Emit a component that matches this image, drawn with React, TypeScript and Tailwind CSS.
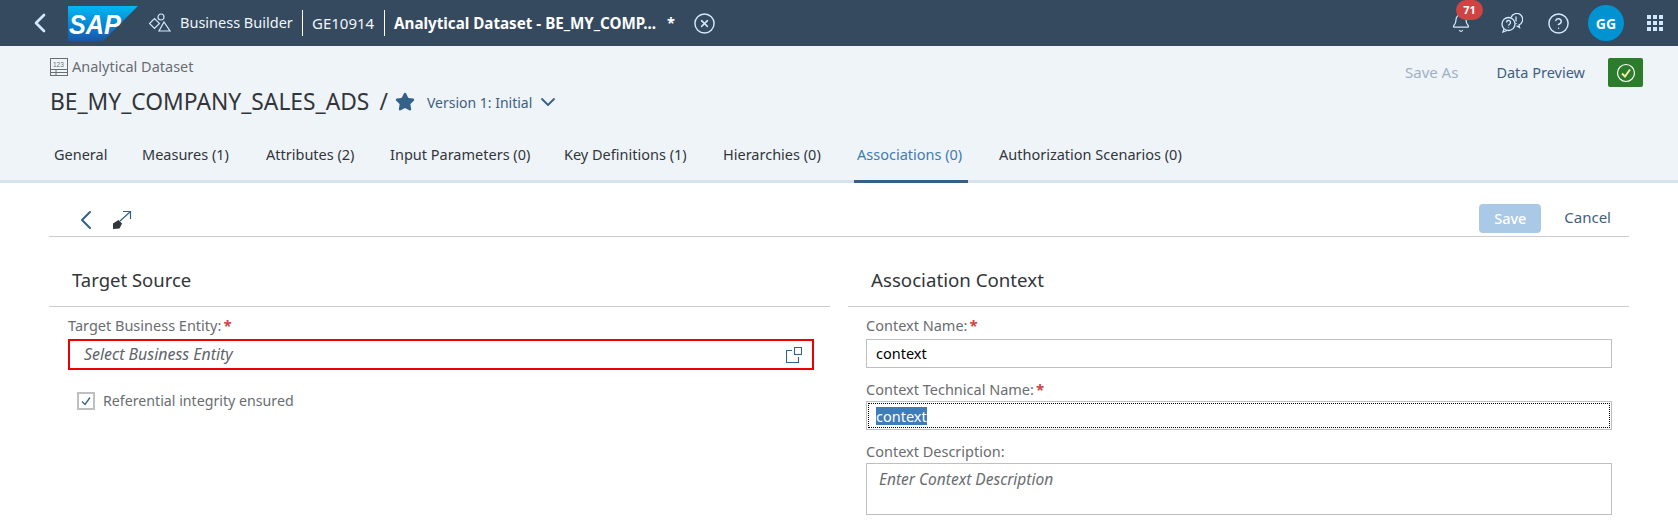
import React from "react";
import { Bell, ChevronDown, ChevronLeft, CircleHelp, CircleX, Star } from "lucide-react";

const tabs = [
  { label: "General", width: "w-[88px]" },
  { label: "Measures (1)", width: "w-[124px]" },
  { label: "Attributes (2)", width: "w-[124px]" },
  { label: "Input Parameters (0)", width: "w-[174px]" },
  { label: "Key Definitions (1)", width: "w-[159px]" },
  { label: "Hierarchies (0)", width: "w-[143px]" },
  { label: "Associations (0)", width: "w-[114px]", active: true },
  { label: "Authorization Scenarios (0)", width: "w-[210px]" },
];

const SapLogo = () => (
  <svg width="70" height="35" viewBox="0 0 70 35" className="shrink-0">
    <defs>
      <linearGradient id="sapGrad" x1="0" y1="0" x2="0" y2="1">
        <stop offset="0" stopColor="#00b8f1" />
        <stop offset="0.6" stopColor="#0a7fd0" />
        <stop offset="1" stopColor="#1c55a5" />
      </linearGradient>
    </defs>
    <polygon points="0,0 70,0 35,35 0,35" fill="url(#sapGrad)" />
    <text x="1" y="28" fill="#fff" fontFamily="Liberation Sans" fontWeight="700" fontSize="27" fontStyle="italic" textLength="52" lengthAdjust="spacingAndGlyphs">
      SAP
    </text>
  </svg>
);

const ShapesIcon = () => (
  <svg width="24" height="20" viewBox="0 0 24 20" fill="none" stroke="#d1e8ff" strokeWidth="1.2" className="shrink-0">
    <circle cx="13" cy="4" r="3" />
    <rect x="3" y="7" width="7" height="7" transform="rotate(45 6.5 10.5)" />
    <path d="M16 9l6 9h-11z" />
  </svg>
);

const ChatIcon = () => (
  <svg width="22" height="20" viewBox="0 0 22 20" fill="none" stroke="#d1e8ff" strokeWidth="1.3">
    <circle cx="7.5" cy="11" r="6.5" />
    <path d="M3 16l-1 3 4-1.5" />
    <path d="M10 4.5a6 6 0 1 1 8 7.5l.5 2.5-3-1.7" />
    <path d="M15 3.5v5M15 10v1" />
    <path d="M5.5 9.5a2 2 0 1 1 3 1.7c-.7.4-1 .8-1 1.5M7.5 14v.5" />
  </svg>
);

const AppGrid = () => (
  <div className="grid grid-cols-3 gap-[2px] w-[16px]">
    {Array.from({ length: 9 }).map((_, i) => (
      <span key={i} className="w-[4px] h-[4px] bg-[#d1e8ff]" />
    ))}
  </div>
);

const DatasetIcon = () => (
  <svg width="18" height="18" viewBox="0 0 18 18" fill="none" stroke="#6a6d70" strokeWidth="1" className="shrink-0">
    <rect x="0.5" y="0.5" width="17" height="17" />
    <path d="M1 11.5h16M1 14.5h16M6 11.5v6" />
    <text x="3" y="8.5" fontSize="6.5" fill="#6a6d70" stroke="none" fontFamily="Liberation Sans">123</text>
  </svg>
);

const AssociationIcon = () => (
  <svg width="20" height="20" viewBox="0 0 20 20" fill="none" className="shrink-0">
    <path d="M1 13.5l5.5-3.5 3.5 3.5-2.5 5-6.5.5z" fill="#32363a" />
    <path d="M8 11l10-9M11 1.5h7.5V9" stroke="#346187" strokeWidth="1.2" />
  </svg>
);

const ValueHelpIcon = () => (
  <svg width="16" height="16" viewBox="0 0 16 16" fill="none" stroke="#346187" strokeWidth="1.1">
    <rect x="8.5" y="0.5" width="7" height="7" />
    <path d="M6 3.5H0.5v12h12V10" />
  </svg>
);

const Label = ({ text, required }: { text: string; required?: boolean }) => (
  <div className="h-[17px] leading-[17px] text-[#6a6d70] flex">
    <span>{text}</span>
    {required && <span className="text-[#d04343] font-bold text-[15px] ml-[2px]">*</span>}
  </div>
);

const App = () => {
  return (
    <div className="w-[1678px] h-[521px] overflow-hidden bg-white font-['Noto_Sans',sans-serif] text-[14.5px]">
      {/* shell header */}
      <header className="h-[46px] bg-[#354a5f] flex items-center text-white">
        <ChevronLeft size={32} strokeWidth={2} className="ml-[24px] mr-[12px] text-[#d1e8ff] shrink-0" />
        <SapLogo />
        <div className="ml-[10px]"><ShapesIcon /></div>
        <span className="ml-[8px] w-[122px] text-[#f0f5fa]">Business Builder</span>
        <span className="w-px h-[26px] bg-white" />
        <span className="ml-[9px] w-[72px] text-[15px] text-[#f0f5fa]">GE10914</span>
        <span className="w-px h-[26px] bg-white" />
        <span className="ml-[9px] w-[265px] text-[15.2px] font-bold whitespace-nowrap">Analytical Dataset - BE_MY_COMP...</span>
        <span className="ml-[8px] font-bold">*</span>
        <CircleX size={23} strokeWidth={1.5} className="ml-[18px] text-[#d1e8ff]" />
        <div className="ml-auto flex items-center">
          <div className="relative w-[24px] flex justify-center">
            <Bell size={20} strokeWidth={1.5} className="text-[#d1e8ff]" />
            <span className="absolute -top-[13px] left-[7px] w-[27px] h-[20px] rounded-full bg-[#d04343] text-[11px] leading-[20px] font-bold text-center">71</span>
          </div>
          <div className="ml-[28px]"><ChatIcon /></div>
          <CircleHelp size={23} strokeWidth={1.5} className="ml-[24px] text-[#d1e8ff]" />
          <span className="ml-[18px] w-[36px] h-[36px] rounded-full bg-[#0092d1] font-bold text-[14px] flex items-center justify-center">GG</span>
          <div className="ml-[23px] mr-[15px]"><AppGrid /></div>
        </div>
      </header>

      {/* object page header */}
      <section className="h-[137px] bg-[#eff4f9] border-b-[3px] border-[#d6e3ef] flex flex-col">
        <div className="flex justify-between">
          <div className="pl-[50px] pt-[12px]">
            <div className="flex items-center gap-[4px] text-[#6a6d70] h-[18px]">
              <DatasetIcon />
              <span>Analytical Dataset</span>
            </div>
            <div className="flex items-center mt-[11px] h-[30px]">
              <span className="text-[22.8px] text-[#32363a] whitespace-nowrap">BE_MY_COMPANY_SALES_ADS</span>
              <span className="ml-[10px] text-[22.8px] text-[#32363a]">/</span>
              <Star size={20} fill="#346187" stroke="#346187" className="ml-[7px]" />
              <span className="ml-[12px] text-[14px] text-[#3f5f80]">Version 1: Initial</span>
              <ChevronDown size={24} strokeWidth={1.8} className="ml-[4px] text-[#346187]" />
            </div>
          </div>
          <div className="flex items-center h-[29px] mt-[12px] pr-[35px]">
            <span className="text-[15px] text-[#9db1c6]">Save As</span>
            <span className="ml-[38px] text-[#3f5f80]">Data Preview</span>
            <span className="ml-[23px] w-[35px] h-[29px] rounded-[2px] bg-[#2b7d2b] flex items-center justify-center">
              <svg width="20" height="20" viewBox="0 0 20 20" fill="none">
                <circle cx="10" cy="10" r="8.5" stroke="#fff" strokeWidth="1.2" />
                <path d="M6 10.5l3 3 5-7" stroke="#fbe9a8" strokeWidth="2" />
              </svg>
            </span>
          </div>
        </div>
        <nav className="mt-auto flex pl-[42px] h-[46px] -mb-[3px]">
          {tabs.map((t) => (
            <div key={t.label} className={`${t.width} pt-[7px] shrink-0 whitespace-nowrap ${t.active ? "pl-[3px] mr-[19px] border-b-[3px] border-[#346187] text-[#427cac]" : "pl-[12px] text-[#32363a]"}`}>
              {t.label}
            </div>
          ))}
        </nav>
      </section>

      {/* toolbar */}
      <div className="mx-[49px] mt-[21px] h-[33px] border-b border-[#cccccc] flex items-center justify-between">
        <div className="flex items-center pb-[1px]">
          <ChevronLeft size={32} strokeWidth={1.5} className="ml-[21px] text-[#346187]" />
          <div className="ml-[10px]"><AssociationIcon /></div>
        </div>
        <div className="flex items-center pb-[3px]">
          <span className="w-[62px] h-[29px] rounded-[4px] bg-[#a9c9e6] text-white font-medium flex items-center justify-center">Save</span>
          <span className="ml-[23px] mr-[18px] text-[15px] text-[#3f5f80] -translate-y-px">Cancel</span>
        </div>
      </div>

      <div className="mx-[49px] flex justify-between">
        {/* left column */}
        <div className="w-[781px]">
          <h2 className="h-[70px] border-b border-[#cccccc] pl-[23px] pt-[31px] text-[18.5px] leading-[24px] text-[#32363a]">Target Source</h2>
          <div className="pl-[19px] pr-[16px] pt-[10px]">
            <Label text="Target Business Entity:" required />
            <div className="mt-[5px] h-[31px] border-2 border-[#ee0000] flex items-center justify-between pl-[14px] pr-[10px]">
              <span className="italic text-[15.9px] text-[#5e6468]">Select Business Entity</span>
              <ValueHelpIcon />
            </div>
            <div className="mt-[20px] ml-[9px] flex items-center">
              <span className="w-[18px] h-[18px] border-2 border-[#bfbfbf] flex items-center justify-center">
                <svg width="12" height="12" viewBox="0 0 12 12" fill="none">
                  <path d="M2 6.5l3 3 5-7" stroke="#346187" strokeWidth="1.3" />
                </svg>
              </span>
              <span className="ml-[8px] text-[14.2px] text-[#6a6d70]">Referential integrity ensured</span>
            </div>
          </div>
        </div>
        {/* right column */}
        <div className="w-[781px]">
          <h2 className="h-[70px] border-b border-[#cccccc] pl-[23px] pt-[31px] text-[18.7px] leading-[24px] text-[#32363a]">Association Context</h2>
          <div className="pl-[18px] pr-[17px] pt-[10px]">
            <Label text="Context Name:" required />
            <div className="mt-[5px] h-[29px] border border-[#bfbfbf] flex items-center pl-[9px] text-[#000000]">context</div>
            <div className="mt-[13px]"><Label text="Context Technical Name:" required /></div>
            <div className="mt-[3px] h-[29px] border border-[#bfbfbf] p-px">
              <div className="h-full border border-dotted border-black flex items-center pl-[7px]">
                <span className="bg-[#3f7db8] text-white leading-[18px]">context</span>
              </div>
            </div>
            <div className="mt-[13px]"><Label text="Context Description:" /></div>
            <div className="mt-[3px] h-[52px] border border-[#bfbfbf] pl-[12px] pt-[4px] italic text-[15.5px] text-[#6a6d70]">Enter Context Description</div>
          </div>
        </div>
      </div>
    </div>
  );
};

export default App;
